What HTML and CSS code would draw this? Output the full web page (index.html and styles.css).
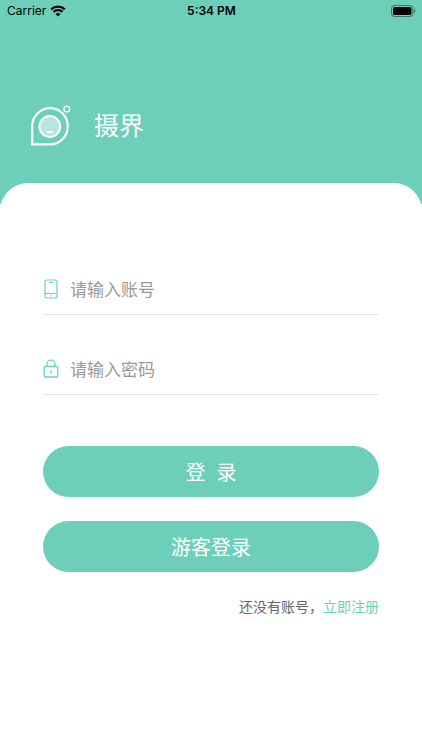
FILE: index.html
```html
<!DOCTYPE html>
<html lang="zh-CN">
<head>
<meta charset="utf-8">
<meta name="viewport" content="width=device-width, initial-scale=1">
<title>摄界</title>
<link rel="stylesheet" href="styles.css">
</head>
<body>
<header class="hero">
  <div class="status">
    <div class="carrier">
      <span>Carrier</span>
      <svg width="16" height="12" viewBox="0 0 16 12" aria-hidden="true">
        <path d="M1.2 4.4a9.8 9.8 0 0 1 13.6 0M3.6 6.9a6.3 6.3 0 0 1 8.8 0" fill="none" stroke="#000" stroke-width="2.2"/>
        <path d="M8 11.6 5.5 9.1a3.6 3.6 0 0 1 5 0z"/>
      </svg>
    </div>
    <div class="time">5:34 PM</div>
    <div class="power">
      <svg width="25" height="12" viewBox="0 0 25 12" aria-hidden="true">
        <rect x=".5" y=".5" width="21.5" height="11" rx="3" fill="none" stroke="#000" stroke-opacity=".45"/>
        <rect x="2" y="2" width="18.5" height="8" rx="1.6"/>
        <path d="M23.2 4v4c1.5-.6 1.5-3.4 0-4z" fill-opacity=".5"/>
      </svg>
    </div>
  </div>
  <div class="brand">
    <svg width="42" height="42" viewBox="0 0 42 42" fill="none" stroke="#fff" aria-hidden="true">
      <path d="M2.2 39.4V21.2A17.8 18.1 0 1 1 20 39.4z" stroke-width="2.2"/>
      <circle cx="19.8" cy="21.5" r="10.4" fill="#b7e7db" stroke-width="2"/>
      <path d="M16.8 27h6" stroke-width="2"/>
      <circle cx="36.8" cy="4" r="2.9" stroke-width="1.3"/>
    </svg>
    <h1>摄界</h1>
  </div>
</header>
<main class="card">
  <form>
    <label class="field">
      <svg width="16" height="20" viewBox="0 0 16 20" fill="none" stroke="#6dcfb9" aria-hidden="true">
        <rect x="2" y="1" width="12" height="18" rx="2" stroke-width="1.2"/>
        <path d="M2 14.5h12M6.3 3.5h3.4M7.3 16.8h1.4" stroke-width="1.2"/>
      </svg>
      <input type="text" placeholder="请输入账号" aria-label="账号">
    </label>
    <label class="field">
      <svg width="16" height="20" viewBox="0 0 16 20" fill="none" stroke="#6dcfb9" stroke-width="1.3" aria-hidden="true">
        <rect x="1.2" y="7.5" width="13.6" height="10.5" rx="1.2"/>
        <path d="M4 7.5V5.2a4 4 0 0 1 8 0v2.3M8 11v3.3"/>
      </svg>
      <input type="password" placeholder="请输入密码" aria-label="密码">
    </label>
    <div class="actions">
      <button type="submit">登&nbsp;&nbsp;录</button>
      <button type="button">游客登录</button>
    </div>
  </form>
  <p class="signup">还没有账号，<a href="#register">立即注册</a></p>
</main>
</body>
</html>
```
FILE: styles.css
```css
* {
  box-sizing: border-box;
}

body {
  margin: 0;
  background: #fff;
  font-family: Inter, "Noto Sans CJK SC", sans-serif;
}

.hero {
  height: 204px;
  background: #6dcfb9;
}

.status {
  display: grid;
  grid-template-columns: 1fr auto 1fr;
  align-items: center;
  height: 22px;
  padding: 0 6px 0 7px;
  font-size: 12px;
  line-height: 16px;
}

.carrier {
  display: flex;
  align-items: center;
  gap: 4px;
}

.time {
  font-weight: 600;
}

.power {
  display: flex;
  justify-content: flex-end;
}

.brand {
  display: flex;
  align-items: center;
  gap: 22px;
  padding: 83px 30px 0;
}

h1 {
  margin: 0;
  color: #fff;
  font-size: 25px;
  font-weight: 400;
  line-height: 42px;
}

.card {
  margin-top: -21px;
  padding: 80px 43px 24px;
  border-radius: 28px 28px 0 0;
  background: #fff;
}

.field {
  display: flex;
  align-items: center;
  gap: 11px;
  height: 52px;
  margin-bottom: 28px;
  border-bottom: 1px solid #e4e4e4;
}

.field svg {
  flex: none;
}

input {
  flex: 1;
  min-width: 0;
  height: 32px;
  padding: 2px 0 0;
  border: 0;
  outline: 0;
  background: none;
  color: #333;
  font: 17px Inter, "Noto Sans CJK SC", sans-serif;
}

input::placeholder {
  color: #999;
}

.actions {
  display: grid;
  gap: 24px;
  padding-top: 23px;
}

button {
  height: 51px;
  padding: 0;
  border: 0;
  border-radius: 26px;
  background: #6dcfb9;
  color: #fff;
  font: 20px Inter, "Noto Sans CJK SC", sans-serif;
  cursor: pointer;
}

.signup {
  margin: 24px 0 0;
  color: #666;
  font-size: 14px;
  line-height: 22px;
  text-align: right;
}

.signup a {
  color: #6dcfb9;
  text-decoration: none;
}
```
